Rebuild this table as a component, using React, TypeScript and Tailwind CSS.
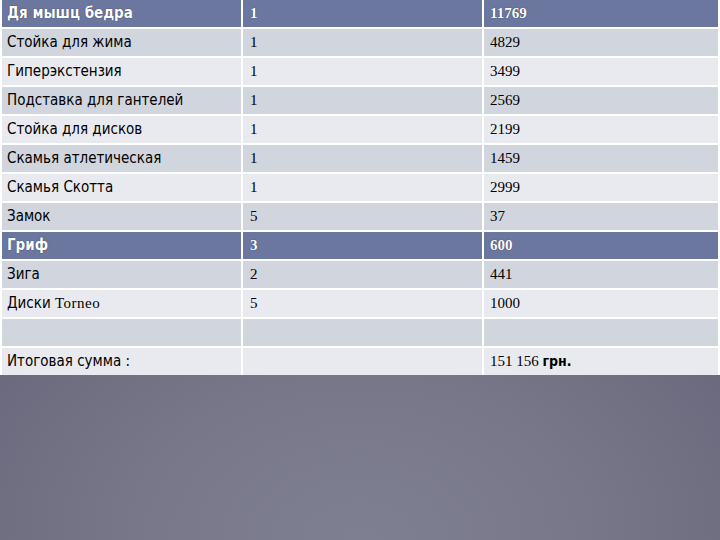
const rows: { name: React.ReactNode; qty: string; price: React.ReactNode; tone: "head" | "dark" | "light" }[] = [
  { name: "Дя мышц бедра", qty: "1", price: "11769", tone: "head" },
  { name: "Стойка для жима", qty: "1", price: "4829", tone: "dark" },
  { name: "Гиперэкстензия", qty: "1", price: "3499", tone: "light" },
  { name: "Подставка для гантелей", qty: "1", price: "2569", tone: "dark" },
  { name: "Стойка для дисков", qty: "1", price: "2199", tone: "light" },
  { name: "Скамья атлетическая", qty: "1", price: "1459", tone: "dark" },
  { name: "Скамья Скотта", qty: "1", price: "2999", tone: "light" },
  { name: "Замок", qty: "5", price: "37", tone: "dark" },
  { name: "Гриф", qty: "3", price: "600", tone: "head" },
  { name: "Зига", qty: "2", price: "441", tone: "dark" },
  {
    name: (
      <span>
        Диски <span className="font-['Liberation_Serif',serif] tracking-[0.5px]">Torneo</span>
      </span>
    ),
    qty: "5",
    price: "1000",
    tone: "light",
  },
  { name: "", qty: "", price: "", tone: "dark" },
  {
    name: "Итоговая сумма :",
    qty: "",
    price: (
      <span>
        151 156 <span className="font-['DejaVu_Sans_Condensed',sans-serif] font-bold text-[14px]">грн.</span>
      </span>
    ),
    tone: "light",
  },
];

const toneClass = {
  head: "bg-[#6b779f] text-white font-bold [text-shadow:0_0_1px_#1e2540]",
  dark: "bg-[#d1d5dd] text-black",
  light: "bg-[#e9eaef] text-black",
};

export default function App() {
  return (
    <div className="w-[720px] h-[540px] bg-[radial-gradient(ellipse_90%_85%_at_50%_100%,#7e8092_0%,#787789_35%,#6c6a7e_65%,#5c5a6c_100%)]">
      <div className="flex flex-col gap-[2px] bg-white px-[2px]">
        {rows.map((r, i) => (
          <div key={i} className="grid grid-cols-[239px_239px_1fr] gap-[2px] h-[27px]">
            <div
              className={`${toneClass[r.tone]} flex items-center pl-[5px] text-[15px] font-['Liberation_Sans_Narrow','DejaVu_Sans_Condensed',sans-serif]`}
            >
              {r.name}
            </div>
            <div className={`${toneClass[r.tone]} flex items-center pl-[7px] text-[15px] font-['Liberation_Serif',serif]`}>
              {r.qty}
            </div>
            <div className={`${toneClass[r.tone]} flex items-center pl-[6px] text-[15px] font-['Liberation_Serif',serif]`}>
              {r.price}
            </div>
          </div>
        ))}
      </div>
    </div>
  );
}
